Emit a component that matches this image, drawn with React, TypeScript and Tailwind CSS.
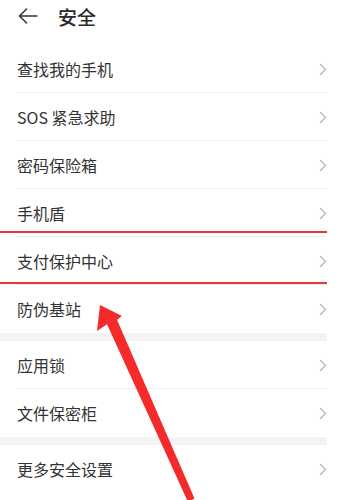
import React from "react";

const groups: string[][] = [
  ["查找我的手机", "SOS 紧急求助", "密码保险箱", "手机盾", "支付保护中心", "防伪基站"],
  ["应用锁", "文件保密柜"],
  ["更多安全设置"],
];

const Chevron = () => (
  <svg width="8" height="13" viewBox="0 0 8 13" fill="none">
    <path d="M1.5 1.5 L6.5 6.5 L1.5 11.5" stroke="#b8b8b8" strokeWidth="1.4" strokeLinecap="round" strokeLinejoin="round" />
  </svg>
);

const Row = ({ label, last }: { label: string; last: boolean }) => (
  <div className="relative flex h-[48px] items-center justify-between pl-[17px]">
    <span className="text-[16px] leading-none text-[#333333]">{label}</span>
    <Chevron />
    {!last && <div className="absolute bottom-0 left-[16px] right-0 h-px bg-[#efefef]" />}
  </div>
);

export default function App() {
  return (
    <div
      className="relative h-[500px] w-[349px] overflow-hidden bg-white"
      style={{ fontFamily: '"Noto Sans CJK SC", "Noto Sans", sans-serif' }}
    >
      <div className="w-[327px]">
        <div className="flex h-[45px] items-center pb-[13px] pl-[18px]">
          <svg width="20" height="16" viewBox="0 0 20 16" fill="none">
            <path d="M19 8 H1.5 M8.5 1 L1.5 8 L8.5 15" stroke="#333333" strokeWidth="1.5" strokeLinecap="round" strokeLinejoin="round" />
          </svg>
          <span className="ml-[20px] text-[19px] font-medium leading-none text-[#2a2a2a]">安全</span>
        </div>
        {groups.map((g, gi) => (
          <div key={gi}>
            {gi > 0 && <div className="h-[8px] bg-[#f3f3f3]" />}
            {g.map((label, i) => (
              <Row key={label} label={label} last={i === g.length - 1} />
            ))}
          </div>
        ))}
      </div>

      {/* red highlight box */}
      <div className="pointer-events-none absolute left-0 top-[231px] h-[53px] w-[327px] border-y-2 border-[#e4383c]" />

      {/* red arrow */}
      <svg className="pointer-events-none absolute inset-0" width="349" height="500" viewBox="0 0 349 500">
        <polygon points="100,305 122,316 117,319.7 194.5,498.5 188,502 107,324.3 97,331" fill="#f52a2a" />
      </svg>
    </div>
  );
}
